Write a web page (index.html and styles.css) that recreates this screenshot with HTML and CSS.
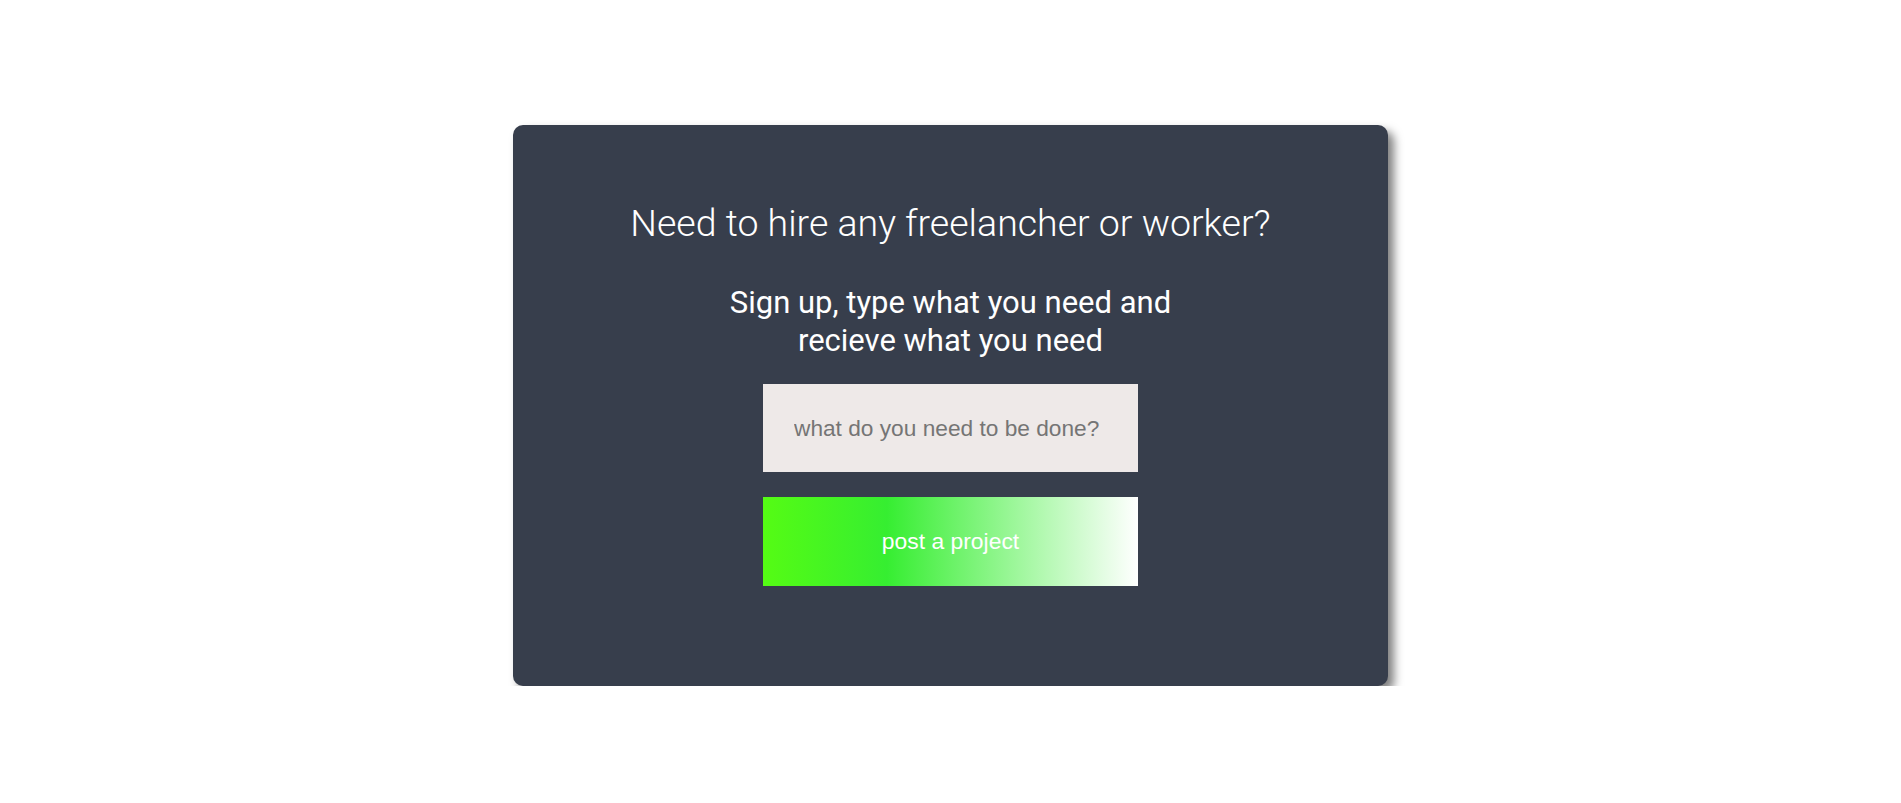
FILE: index.html
```html
<!DOCTYPE html>
<html lang="en">
<head>
<meta charset="utf-8">
<title>Hire a freelancer</title>
<link rel="stylesheet" href="styles.css">
</head>
<body>
<main class="page">
  <section class="card">
    <h1 class="title">Need to hire any freelancher or worker?</h1>
    <h2 class="subtitle">Sign up, type what you need and<br>recieve what you need</h2>
    <form class="form">
      <input class="field" type="text" placeholder="what do you need to be done?">
      <button class="btn" type="button">post a project</button>
    </form>
  </section>
</main>
</body>
</html>
```
FILE: styles.css
```css
html, body {
  margin: 0;
  padding: 0;
  background: #ffffff;
}

.page {
  display: flex;
  justify-content: center;
  padding-top: 125px;
}

.card {
  width: 875px;
  box-sizing: border-box;
  padding: 77px 0 100px;
  background: #373e4c;
  border-radius: 10px;
  box-shadow: 6px 6px 10px rgba(0, 0, 0, 0.5);
  display: flex;
  flex-direction: column;
  align-items: center;
  text-align: center;
  color: #ffffff;
  font-family: Roboto, "Liberation Sans", sans-serif;
}

.title {
  margin: 0;
  font-size: 37.5px;
  font-weight: 300;
  line-height: 42px;
}

.subtitle {
  margin: 40px 0 0;
  font-size: 31px;
  font-weight: 400;
  line-height: 38px;
}

.form {
  margin-top: 24px;
  display: flex;
  flex-direction: column;
  gap: 25px;
}

.field {
  width: 375px;
  height: 88px;
  box-sizing: border-box;
  border: none;
  outline: none;
  padding: 0 31px;
  background: #eee9e8;
  font-family: "Liberation Sans", Arial, sans-serif;
  font-size: 22.7px;
  color: #444;
}

.field::placeholder {
  color: #757575;
}

.btn {
  width: 375px;
  height: 89px;
  border: none;
  padding: 0;
  background: linear-gradient(to right, #55fc14 0%, #36ee31 33%, #ffffff 100%);
  font-family: "Liberation Sans", Arial, sans-serif;
  font-size: 22.9px;
  color: #ffffff;
  cursor: pointer;
}
```
